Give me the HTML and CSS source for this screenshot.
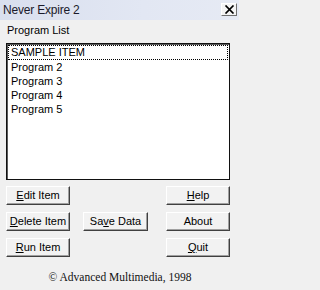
FILE: index.html
```html
<!DOCTYPE html>
<html>
<head>
<meta charset="utf-8">
<link rel="stylesheet" href="styles.css">
</head>
<body>
<div class="window">
  <div class="titlebar">
    <span class="title">Never Expire 2</span>
    <span class="close"><svg width="11" height="9" viewBox="0 0 11 9"><path d="M1.5 0.5 L9.5 8.5 M9.5 0.5 L1.5 8.5" stroke="#000" stroke-width="1.7" fill="none"/></svg></span>
  </div>
  <div class="content">
    <div class="label">Program List</div>
    <div class="listbox">
      <div class="row focus">SAMPLE ITEM</div>
      <div class="row">Program 2</div>
      <div class="row">Program 3</div>
      <div class="row">Program 4</div>
      <div class="row">Program 5</div>
    </div>
    <div class="buttons">
      <div class="btn"><u>E</u>dit Item</div>
      <div></div>
      <div class="btn"><u>H</u>elp</div>
      <div class="btn"><u>D</u>elete Item</div>
      <div class="btn wide">Sa<u>v</u>e Data</div>
      <div class="btn">About</div>
      <div class="btn"><u>R</u>un Item</div>
      <div></div>
      <div class="btn"><u>Q</u>uit</div>
    </div>
    <div class="copy">© Advanced Multimedia, 1998</div>
  </div>
</div>
</body>
</html>
```

FILE: styles.css
```css
html, body {
  margin: 0;
  padding: 0;
  background: #f0f0f0;
}
.window {
  width: 239px;
  height: 290px;
  background: #f0f0f0;
  font-family: "Liberation Sans", Arial, sans-serif;
  font-size: 11px;
  color: #000;
  overflow: hidden;
}
.titlebar {
  height: 20px;
  display: flex;
  align-items: center;
  justify-content: space-between;
  background: linear-gradient(90deg, #d9dfee 0%, #e2e7f3 60%, #e6eaf4 100%);
  padding: 0 2px 0 3px;
  box-sizing: border-box;
}
.title {
  font-size: 12px;
  color: #1a1a2a;
  letter-spacing: -0.2px;
}
.close {
  width: 16px;
  height: 13px;
  box-sizing: border-box;
  margin-top: -2px;
  display: flex;
  align-items: center;
  justify-content: center;
  background: #f4f4f4;
  border-top: 1px solid #fff;
  border-left: 1px solid #fff;
  border-right: 1px solid #707070;
  border-bottom: 1px solid #707070;
}
.content {
  padding: 2px 9px 0 6px;
}
.label {
  height: 21px;
  line-height: 17px;
  padding-left: 1px;
}
.listbox {
  height: 137px;
  box-sizing: border-box;
  background: #fff;
  border: 1px solid #111;
  box-shadow: inset 1px 1px 0 #5a5a5a;
  padding: 1px 1px 0 1px;
}
.row {
  height: 14px;
  line-height: 14px;
  padding-left: 3px;
  box-sizing: border-box;
}
.row.focus {
  outline: 1px dotted #000;
  outline-offset: -1px;
  height: 15px;
  line-height: 15px;
}
.buttons {
  margin-top: 6px;
  display: grid;
  grid-template-columns: 77px 83px 64px;
  grid-auto-rows: 19px;
  row-gap: 7px;
}
.btn {
  width: 64px;
  height: 19px;
  box-sizing: border-box;
  background: #f2f2f2;
  border-top: 1px solid #fff;
  border-left: 1px solid #fff;
  border-right: 1px solid #404040;
  border-bottom: 1px solid #404040;
  box-shadow: inset -1px -1px 0 #a0a0a0;
  display: flex;
  align-items: center;
  justify-content: center;
  font-size: 11px;
  line-height: 1;
}
.btn.wide {
  width: 65px;
}
.btn u {
  text-decoration-thickness: 1px;
  text-underline-offset: 1px;
}
.copy {
  margin-top: 14px;
  text-align: center;
  font-family: "Liberation Serif", "Times New Roman", serif;
  font-size: 11.5px;
  padding-left: 4px;
  color: #111;
}
```
